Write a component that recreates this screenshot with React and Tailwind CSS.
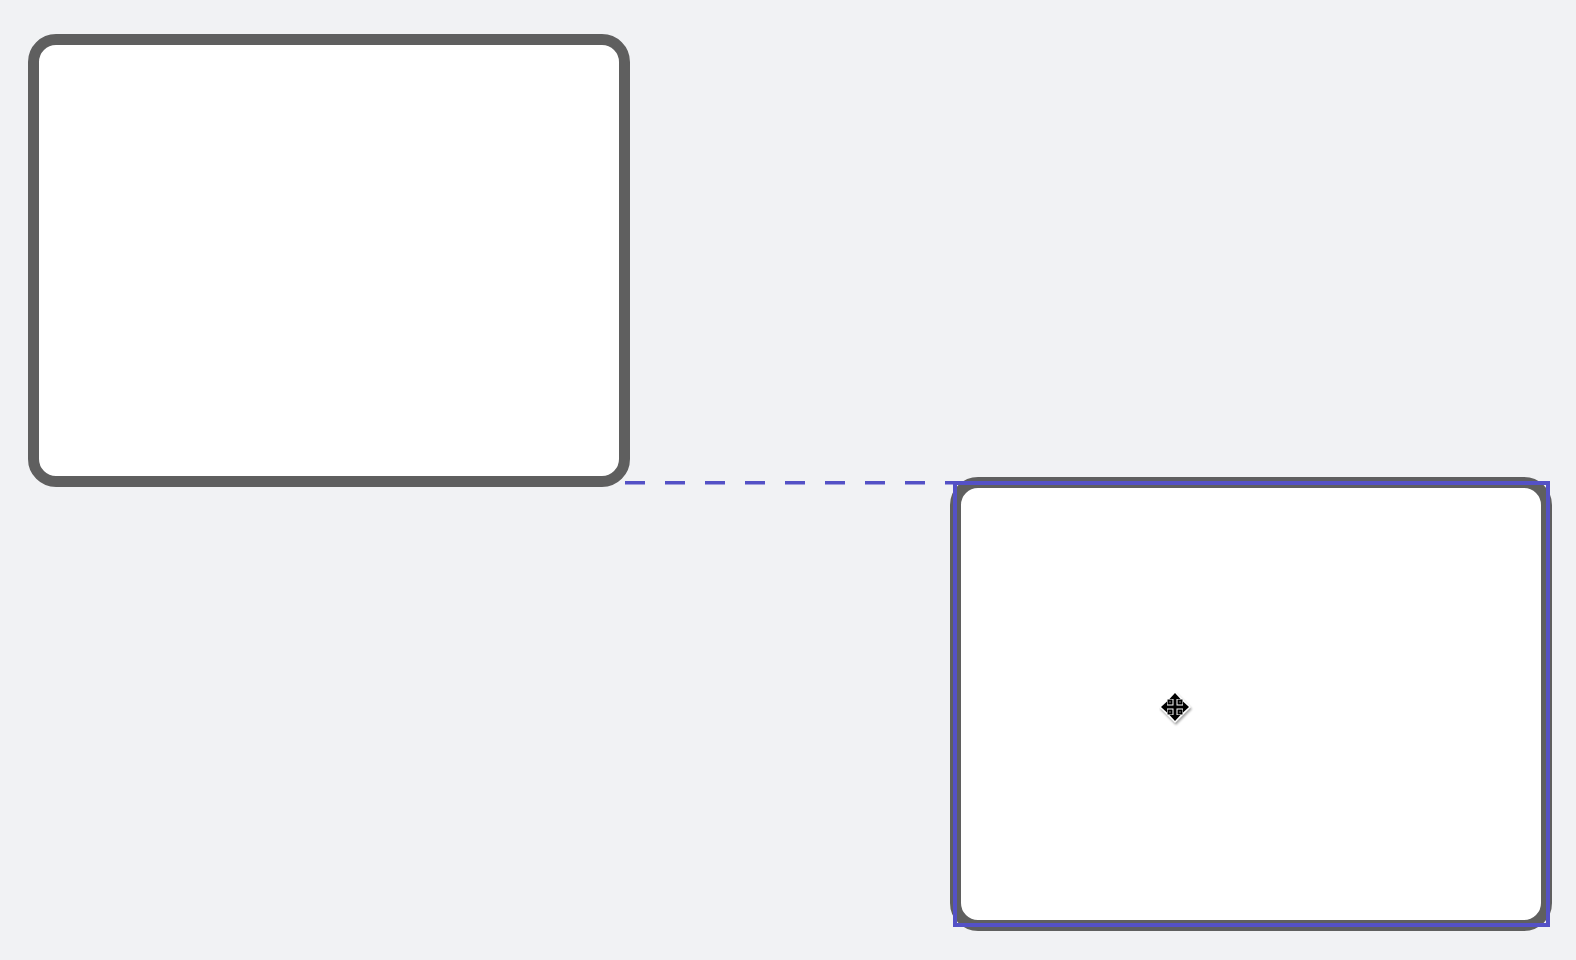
import React from 'react';

// Move cursor drawn as the system four-way arrow on a white diamond
const MoveCursor = () => (
  <svg width="36" height="36" viewBox="0 0 36 36" className="absolute left-[1159px] top-[691px] pointer-events-none">
    <defs>
      <filter id="cursor-shadow" x="-30%" y="-30%" width="160%" height="160%">
        <feGaussianBlur stdDeviation="1.2" />
      </filter>
    </defs>
    <polygon points="17,2 33,18 17,34 1,18" fill="#000" opacity="0.35" filter="url(#cursor-shadow)" />
    <polygon points="16,0 32,16 16,32 0,16" fill="#fff" />
    <g fill="#000">
      <rect x="14.5" y="5" width="3" height="22" />
      <rect x="5" y="14.5" width="22" height="3" />
      <polygon points="16,2 10.5,8 21.5,8" />
      <polygon points="16,30 10.5,24 21.5,24" />
      <polygon points="2,16 8,10.5 8,21.5" />
      <polygon points="30,16 24,10.5 24,21.5" />
      <rect x="8.5" y="8.5" width="5" height="5" />
      <rect x="18.5" y="8.5" width="5" height="5" />
      <rect x="8.5" y="18.5" width="5" height="5" />
      <rect x="18.5" y="18.5" width="5" height="5" />
    </g>
    <g fill="#fff">
      <rect x="10.5" y="10.5" width="1" height="1" />
      <rect x="20.5" y="10.5" width="1" height="1" />
      <rect x="10.5" y="20.5" width="1" height="1" />
      <rect x="20.5" y="20.5" width="1" height="1" />
    </g>
  </svg>
);

export default function App() {
  return (
    <div className="relative w-full h-[960px] overflow-hidden bg-[#f1f2f4]">
      {/* alignment guide between the two nodes */}
      <svg width="332" height="4" className="absolute left-[625px] top-[481px]">
        <line x1="0" y1="1.75" x2="332" y2="1.75" stroke="#5451c6" strokeWidth="3.5" strokeDasharray="20 20" />
      </svg>

      {/* nodes */}
      <div className="absolute left-[28px] top-[34px] w-[602px] h-[453px] rounded-[28px] border-[11px] border-[#5f5f5f] bg-white" />
      <div className="absolute left-[950px] top-[477px] w-[602px] h-[454px] rounded-[28px] border-[11px] border-[#5f5f5f] bg-white" />

      {/* selection outline */}
      <div className="absolute left-[953px] top-[481px] w-[597px] h-[446px] border-4 border-[#5451c6]" />

      <MoveCursor />
    </div>
  );
}
